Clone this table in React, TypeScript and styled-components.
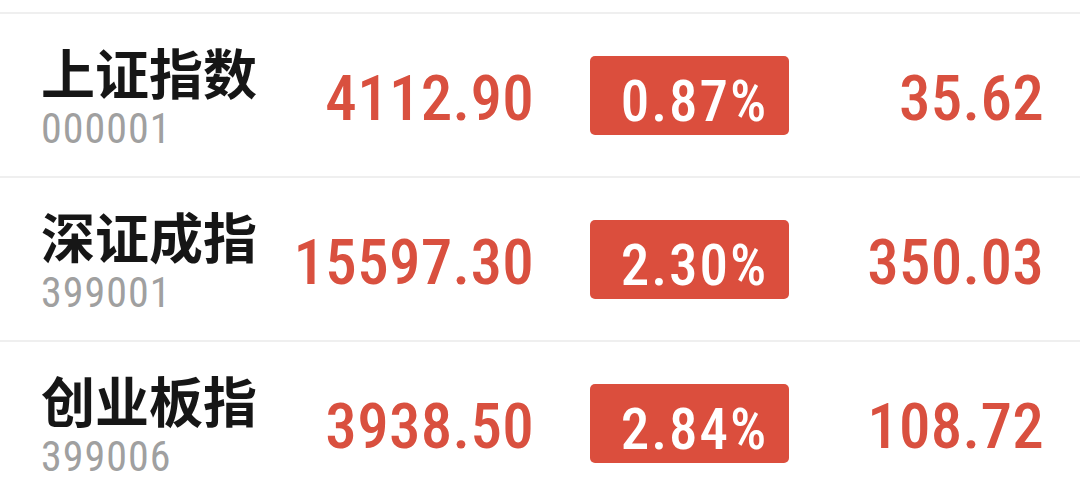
import React from "react";
import styled, { createGlobalStyle } from "styled-components";

const GlobalStyle = createGlobalStyle`
  html, body {
    margin: 0;
    padding: 0;
    background: #ffffff;
  }
  body {
    font-family: Roboto, "Noto Sans CJK SC", sans-serif;
  }
`;

const List = styled.div`
  padding-top: 12px;
  background: #ffffff;
`;

const Row = styled.div`
  box-sizing: border-box;
  height: 164px;
  border-top: 2px solid #efefef;
  display: flex;
  align-items: center;
  padding: 0 36px 0 41px;
`;

const NameBlock = styled.div`
  width: 222px;
  display: flex;
  flex-direction: column;
  padding-top: 6px;
`;

const Name = styled.div`
  font-family: "Noto Sans CJK SC", sans-serif;
  font-weight: 700;
  font-size: 54px;
  line-height: 60px;
  color: #161616;
  white-space: nowrap;
`;

const Code = styled.div`
  margin-top: 2px;
  font-family: Roboto, sans-serif;
  font-stretch: 75%;
  font-weight: 400;
  font-size: 42px;
  line-height: 50px;
  letter-spacing: 1px;
  color: #a0a0a0;
`;

const Num = styled.div`
  font-family: Roboto, sans-serif;
  font-stretch: 75%;
  font-weight: 500;
  font-size: 63px;
  line-height: 63px;
  letter-spacing: 0.3px;
  color: #d9503f;
  text-align: right;
  margin-top: 7px;
  white-space: nowrap;
`;

const Price = styled(Num)`
  width: 271px;
`;

const Change = styled(Num)`
  flex: 1;
`;

const Badge = styled.div`
  box-sizing: border-box;
  margin-left: 56px;
  width: 199px;
  height: 79px;
  border-radius: 5px;
  background: #db4e3d;
  color: #ffffff;
  display: flex;
  align-items: center;
  justify-content: center;
  padding: 12px 0 0 10px;
  font-family: Roboto, sans-serif;
  font-stretch: 75%;
  font-weight: 500;
  font-size: 57px;
  line-height: 57px;
  letter-spacing: 2px;
  white-space: nowrap;
`;

const data = [
  { name: "上证指数", code: "000001", price: "4112.90", pct: "0.87%", chg: "35.62" },
  { name: "深证成指", code: "399001", price: "15597.30", pct: "2.30%", chg: "350.03" },
  { name: "创业板指", code: "399006", price: "3938.50", pct: "2.84%", chg: "108.72" },
];

export default function App() {
  return (
    <>
      <GlobalStyle />
      <List>
        {data.map((d) => (
          <Row key={d.code}>
            <NameBlock>
              <Name>{d.name}</Name>
              <Code>{d.code}</Code>
            </NameBlock>
            <Price>{d.price}</Price>
            <Badge>{d.pct}</Badge>
            <Change>{d.chg}</Change>
          </Row>
        ))}
      </List>
    </>
  );
}
